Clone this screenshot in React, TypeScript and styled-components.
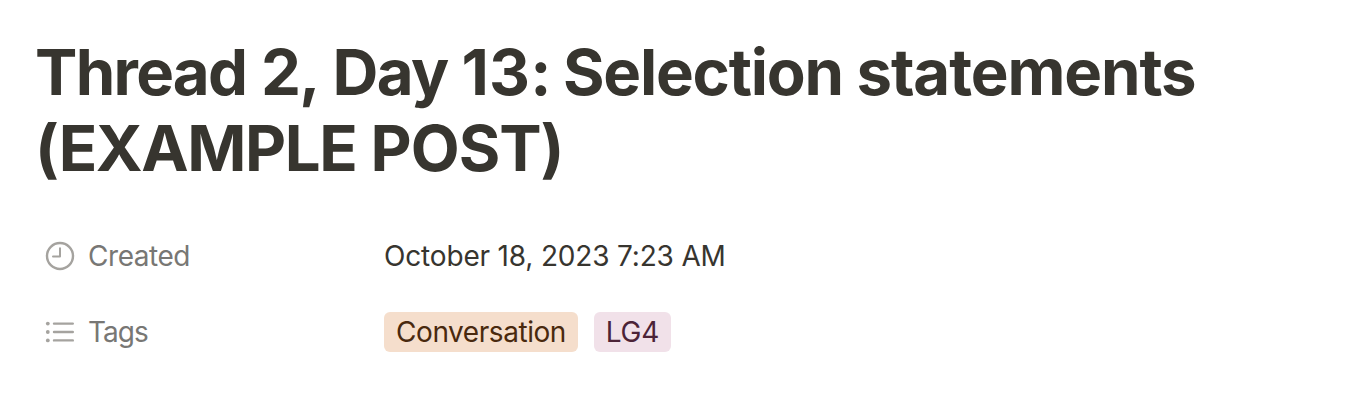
import React from "react";
import styled, { createGlobalStyle } from "styled-components";

const Global = createGlobalStyle`
  body { margin: 0; background: #fff; font-family: Inter, sans-serif; }
`;
const Page = styled.main`
  box-sizing: border-box;
  width: 1364px;
  height: 402px;
  padding: 34px 35px 0;
`;
const Title = styled.h1`
  margin: 0 0 32px;
  font-size: 63.5px;
  line-height: 76px;
  font-weight: 700;
  letter-spacing: -1.5px;
  color: #37352f;
`;
const Line = styled.span`
  display: block;
  width: max-content;
  white-space: nowrap;
`;
const Word = styled.span<{ $tracking: number; $after?: number }>`
  letter-spacing: ${(p) => p.$tracking}px;
  margin-right: ${(p) => p.$after ?? 0}px;
`;
const Row = styled.div`
  display: flex;
  align-items: center;
  height: 76px;
  padding-left: 10px;
  font-size: 28px;
  line-height: 40px;
`;
const Label = styled.div`
  display: flex;
  align-items: center;
  gap: 13px;
  width: 339px;
  color: #787774;
`;
const Value = styled.div`
  display: flex;
  gap: 16px;
  color: #37352f;
`;
const Text = styled.span<{ $tracking: number }>`
  white-space: nowrap;
  letter-spacing: ${(p) => p.$tracking}px;
`;
const Tag = styled.span<{ $bg: string; $fg: string; $w: number }>`
  display: flex;
  justify-content: center;
  width: ${(p) => p.$w}px;
  height: 40px;
  border-radius: 6px;
  background: ${(p) => p.$bg};
  color: ${(p) => p.$fg};
`;

export default function App() {
  return (
    <Page>
      <Global />
      <Title>
        <Line>
          <Word $tracking={-1.7} $after={1}>Thread</Word> <Word $tracking={-1.6}>2,</Word>{" "}
          <Word $tracking={-1.5}>Day</Word> <Word $tracking={0.3} $after={-2.5}>13:</Word>{" "}
          <Word $tracking={-1.2}>Selection</Word> <Word $tracking={-1.1}>statements</Word>
        </Line>
        <Line>
          <Word $tracking={-1.4} $after={0.5}>(EXAMPLE</Word> <Word $tracking={-1}>POST)</Word>
        </Line>
      </Title>
      <Row>
        <Label>
          <svg width="30" height="30" viewBox="0 0 30 30" fill="none" stroke="#a5a39f" strokeWidth="2.4">
            <circle cx="15" cy="15" r="13" />
            <path d="M15 7.2v8.3H8" strokeWidth="2" strokeLinecap="round" strokeLinejoin="round" />
          </svg>
          <Text $tracking={-0.45}>Created</Text>
        </Label>
        <Value><Text $tracking={-0.17}>October 18, 2023 7:23 AM</Text></Value>
      </Row>
      <Row>
        <Label>
          <svg width="30" height="30" viewBox="0 0 30 30" fill="none" stroke="#a5a39f" strokeWidth="2.4" strokeLinecap="round">
            <path d="M9 6.6h18.8M9 15h18.8M9 23.4h18.8" />
            <g fill="#a5a39f" stroke="none"><circle cx="2.8" cy="6.6" r="1.9" /><circle cx="2.8" cy="15" r="1.9" /><circle cx="2.8" cy="23.4" r="1.9" /></g>
          </svg>
          <Text $tracking={-1}>Tags</Text>
        </Label>
        <Value>
          <Tag $w={194} $bg="#f5decc" $fg="#49290e"><Text $tracking={-0.45}>Conversation</Text></Tag>
          <Tag $w={77} $bg="#f1e1e9" $fg="#4c2337"><Text $tracking={-0.2}>LG4</Text></Tag>
        </Value>
      </Row>
    </Page>
  );
}
